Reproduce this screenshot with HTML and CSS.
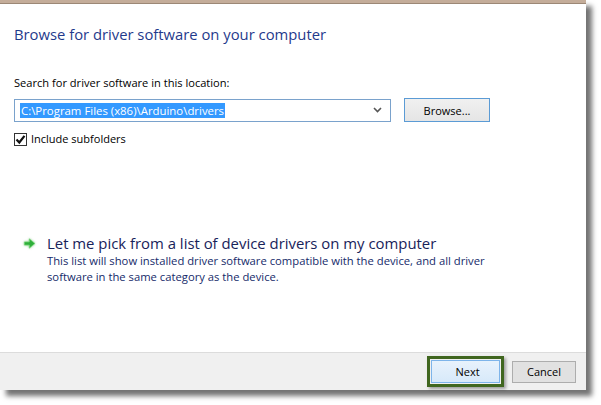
FILE: index.html
```html
<!DOCTYPE html>
<html>
<head>
<meta charset="utf-8">
<link rel="stylesheet" href="styles.css">
</head>
<body>
<div class="window">
  <div class="topbar"></div>
  <div class="content">
    <h1 class="title">Browse for driver software on your computer</h1>
    <div class="label">Search for driver software in this location:</div>
    <div class="row">
      <div class="combo">
        <span class="sel">C:\Program Files (x86)\Arduino\drivers</span>
        <svg class="chev" width="9" height="6" viewBox="0 0 9 6"><path d="M1 1 L4.5 4.5 L8 1" fill="none" stroke="#555" stroke-width="1.6"/></svg>
      </div>
      <button class="btn browse">Browse...</button>
    </div>
    <label class="check">
      <span class="box"><svg width="11" height="11" viewBox="0 0 11 11"><path d="M1.5 5.5 L4.3 8.5 L9.5 1.8" fill="none" stroke="#111" stroke-width="2.2"/></svg></span>
      Include subfolders
    </label>
    <div class="cmdlink">
      <svg class="arrow" width="13" height="13" viewBox="0 0 14 14"><path d="M1.5 5.3 H6.8 V2 L12.8 7 L6.8 12 V8.7 H1.5 Z" fill="#2fae3a" stroke="#7ad67a" stroke-width="0.8" stroke-linejoin="round"/></svg>
      <div class="cl-text">
        <div class="cl-title">Let me pick from a list of device drivers on my computer</div>
        <div class="cl-desc">This list will show installed driver software compatible with the device, and all driver software in the same category as the device.</div>
      </div>
    </div>
  </div>
  <div class="footer">
    <div class="highlight"><button class="btn next">Next</button></div>
    <button class="btn cancel">Cancel</button>
  </div>
</div>
</body>
</html>
```

FILE: styles.css
```css
html, body {
  margin: 0;
  padding: 0;
  background: #ffffff;
}
body {
  font-family: "Open Sans", "Noto Sans", sans-serif;
  width: 601px;
  height: 405px;
  overflow: hidden;
}
.window {
  width: 586px;
  height: 390px;
  background: #ffffff;
  display: flex;
  flex-direction: column;
  box-shadow: 6px 6px 5px rgba(0, 0, 0, 0.55);
}
.topbar {
  height: 3px;
  background: #c4ad9a;
  border-bottom: 1px solid #9c8876;
}
.content {
  flex: 1;
  padding: 0 0 0 14px;
}
.title {
  margin: 19px 0 0 0;
  font-size: 14.8px;
  font-weight: normal;
  color: #1f3a8c;
  line-height: 22px;
}
.label {
  margin-top: 30px;
  font-size: 11.1px;
  color: #000;
  line-height: 16px;
}
.row {
  display: flex;
  align-items: center;
  margin-top: 7px;
}
.combo {
  height: 21px;
  border: 1px solid #7aa2cc;
  display: flex;
  align-items: center;
  justify-content: space-between;
  padding: 0 8px 0 5px;
  box-sizing: content-box;
  width: 362px;
}
.sel {
  background: #3399ff;
  color: #fff;
  font-size: 11.4px;
  line-height: 15px;
  padding: 0 1px;
}
.btn {
  font-family: "Open Sans", "Noto Sans", sans-serif;
  font-size: 11px;
  color: #000;
  padding: 0;
  margin: 0;
  cursor: default;
}
.browse {
  margin-left: 13px;
  width: 86px;
  height: 24px;
  border: 1px solid #5b9bd5;
  background: linear-gradient(#f0f0f0, #e5e5e5);
}
.check {
  display: flex;
  align-items: center;
  margin-top: 10px;
  font-size: 11px;
  line-height: 14px;
}
.box {
  width: 11px;
  height: 11px;
  border: 1px solid #333;
  margin-right: 4px;
  display: flex;
  align-items: center;
  justify-content: center;
  background: #fff;
}
.cmdlink {
  display: flex;
  align-items: flex-start;
  margin-top: 87px;
  padding-left: 9px;
}
.arrow {
  margin-top: 4px;
  margin-right: 11px;
  filter: drop-shadow(0 0 1px rgba(60, 170, 60, 0.6));
}
.cl-text {
  width: 480px;
}
.cl-title {
  font-size: 14.9px;
  color: #18235a;
  line-height: 20px;
}
.cl-desc {
  font-size: 11.25px;
  color: #152a6a;
  line-height: 16px;
  margin-top: 0;
}
.footer {
  height: 37px;
  border-top: 1px solid #dcdcdc;
  background: #f0f0f0;
  display: flex;
  align-items: center;
  justify-content: flex-end;
  padding-right: 10px;
}
.highlight {
  border: 3px solid #40661f;
  padding: 1px 1px;
  margin-right: 8px;
  box-shadow: 2px 2px 3px rgba(0, 0, 0, 0.35);
  display: flex;
}
.next {
  width: 69px;
  height: 23px;
  padding-left: 4px;
  border: 1px solid #7eb4ea;
  background: linear-gradient(#e8f2fc, #d7e9fa);
}
.cancel {
  width: 64px;
  height: 22px;
  border: 1px solid #adadad;
  background: #e1e1e1;
}
```
